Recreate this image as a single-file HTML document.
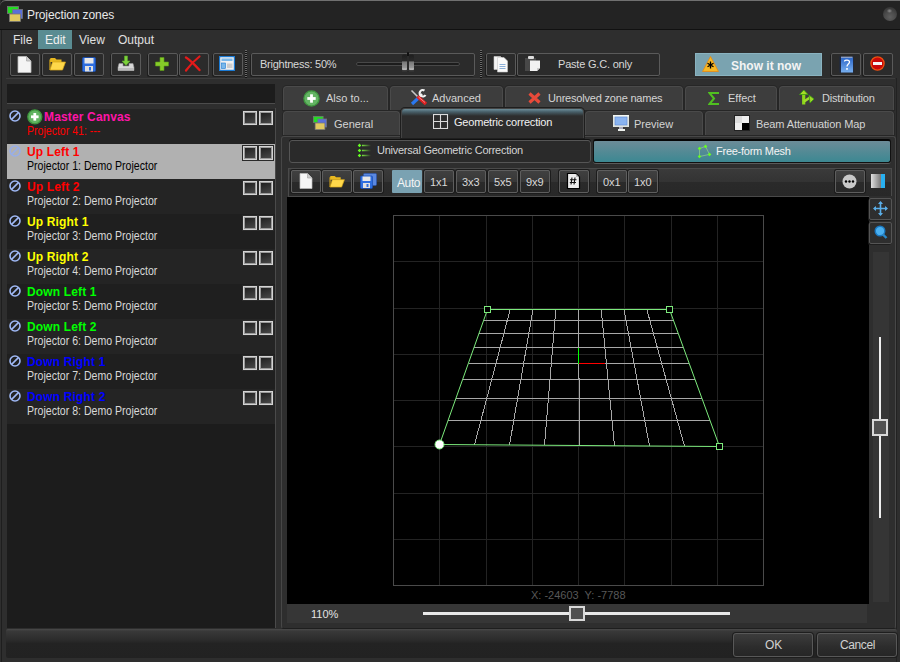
<!DOCTYPE html>
<html><head><meta charset="utf-8">
<style>
*{box-sizing:border-box;margin:0;padding:0}
html,body{width:900px;height:662px;overflow:hidden;background:#2f2f2f;font-family:"Liberation Sans",sans-serif;font-size:11px;color:#d8d8d8}
.a{position:absolute}
.t{position:absolute;white-space:nowrap;line-height:13px}
.btn{position:absolute;border:1px solid #5a5a5a;background:#2b2b2b;border-radius:2px;box-shadow:-1px 1px 0 #1e1e1e}
.gbtn{position:absolute;border:1px solid #5e5e5e;border-radius:2px;box-shadow:0 0 0 1px #1c1c1c;background:linear-gradient(#404040 0,#383838 50%,#2a2a2a 50%,#282828 100%)}
.obtn{position:absolute;border:1px solid #585858;border-radius:3px;box-shadow:0 0 0 1px #1e1e1e;background:linear-gradient(#3c3c3c,#2c2c2c 60%,#262626)}
.tab{position:absolute;border:1px solid #4a4a4a;border-bottom:none;border-radius:4px 4px 0 0;background:#3d3d3d;box-shadow:0 0 0 1px #262626}
.row{position:absolute;left:7px;width:268px;height:35px}
.ban{position:absolute;left:2px;top:1px;width:12px;height:12px}
.cb{position:absolute;top:2px;width:14px;height:14px;border:1px solid #d4d4d4;box-shadow:inset 0 0 0 1px #9a9a9a,0 0 0 1px #2a2a2a;background:linear-gradient(160deg,#1c1c1c,#4c4c4c)}
.nm{position:absolute;left:20px;top:1px;font-weight:bold;font-size:12px;line-height:14px;letter-spacing:0.15px;white-space:nowrap}
.pj{position:absolute;left:20px;top:15px;font-size:12px;line-height:14px;transform:scaleX(0.88);transform-origin:0 0;white-space:nowrap;color:#d8d8d8}
</style></head><body>
<!-- window frame -->
<div class="a" style="left:0;top:0;width:900px;height:662px;background:#2e2e2e"></div><div class="a" style="left:1px;top:0;width:1px;height:662px;background:#1e1e1e"></div><div class="a" style="left:896px;top:78px;width:1px;height:584px;background:#222"></div>
<!-- title bar -->
<div class="a" style="left:0;top:0;width:900px;height:30px;background:#232323;border-top:1px solid #707070;border-radius:6px 0 0 0;border-bottom:1px solid #111"></div>
<svg class="a" style="left:6px;top:5px" width="18" height="18" viewBox="0 0 18 18">
<rect x="1.5" y="1.5" width="11" height="7" fill="#22dd22" stroke="#777" stroke-width="0.8"/>
<rect x="6.5" y="4.5" width="10" height="9" fill="#5a6fd8" stroke="#777" stroke-width="0.8"/>
<rect x="3.5" y="9" width="11" height="7.5" fill="#e0c860" stroke="#777" stroke-width="0.8"/>
</svg>
<div class="t" style="left:27px;top:9px;font-size:12px;letter-spacing:-0.1px;color:#e8e8e8">Projection zones</div>
<div class="a" style="left:883px;top:7px;width:14px;height:14px;border-radius:50%;background:radial-gradient(circle at 50% 72%,#5e5e5e 0,#4a4a4a 45%,#2a2a2a 100%)"></div><div class="a" style="left:887px;top:9px;width:5px;height:4px;border-radius:50%;background:radial-gradient(#8a8a8a,#5a5a5a 60%,transparent 100%)"></div>

<!-- menu -->
<div class="a" style="left:38px;top:30px;width:34px;height:19px;background:#5a8c92"></div>
<div class="t" style="left:13px;top:34px;font-size:12px;color:#e0e0e0">File</div>
<div class="t" style="left:45px;top:34px;font-size:12px;color:#f0f0f0">Edit</div>
<div class="t" style="left:79px;top:34px;font-size:12px;color:#e0e0e0">View</div>
<div class="t" style="left:118px;top:34px;font-size:12px;color:#e0e0e0">Output</div>

<!-- toolbar -->
<div class="btn" style="left:10px;top:53px;width:30px;height:23px"></div>
<div class="btn" style="left:42px;top:53px;width:30px;height:23px"></div>
<div class="btn" style="left:74px;top:53px;width:30px;height:23px"></div>
<div class="btn" style="left:111px;top:53px;width:30px;height:23px"></div>
<div class="btn" style="left:148px;top:53px;width:30px;height:23px"></div>
<div class="btn" style="left:179px;top:53px;width:30px;height:23px"></div>
<div class="btn" style="left:213px;top:53px;width:30px;height:23px"></div>
<div class="a" style="left:245px;top:50px;width:2px;height:28px;background:repeating-linear-gradient(#6a6a6a 0,#6a6a6a 1px,#111 1px,#111 2px)"></div>
<div class="btn" style="left:251px;top:53px;width:224px;height:23px"></div>
<div class="t" style="left:260px;top:58px;font-size:11px;letter-spacing:-0.25px;color:#d8d8d8">Brightness: 50%</div>
<div class="a" style="left:356px;top:62px;width:104px;height:4px;background:#1c1c1c;border:1px solid #484848;border-radius:2px"></div>
<svg class="a" style="left:401px;top:51px" width="14" height="22" viewBox="0 0 14 22"><defs><linearGradient id="th" x1="0" y1="0" x2="0" y2="1"><stop offset="0" stop-color="#1e1e1e"/><stop offset="0.42" stop-color="#2a2a2a"/><stop offset="0.45" stop-color="#777"/><stop offset="0.85" stop-color="#999"/><stop offset="0.92" stop-color="#ccc"/><stop offset="1" stop-color="#555"/></linearGradient></defs><rect x="1" y="3.5" width="5" height="16" rx="1.5" fill="url(#th)"/><rect x="8" y="3.5" width="5" height="16" rx="1.5" fill="url(#th)"/><rect x="6" y="1" width="2" height="20" rx="1" fill="#111"/><rect x="6.5" y="5" width="1" height="15" fill="#444"/><rect x="1" y="19.5" width="12" height="1" fill="#3a3a3a"/></svg>
<div class="a" style="left:480px;top:50px;width:2px;height:28px;background:repeating-linear-gradient(#6a6a6a 0,#6a6a6a 1px,#111 1px,#111 2px)"></div>
<div class="btn" style="left:486px;top:53px;width:30px;height:23px"></div>
<div class="btn" style="left:517px;top:53px;width:143px;height:23px"></div>
<div class="t" style="left:558px;top:58px;font-size:11px;letter-spacing:-0.2px;color:#d8d8d8">Paste G.C. only</div>
<div class="a" style="left:695px;top:53px;width:127px;height:23px;background:#7aa3b0;border:1px solid #8ab3c0"></div>
<div class="t" style="left:731px;top:60px;font-size:12px;font-weight:bold;color:#f4f4f4">Show it now</div>
<div class="btn" style="left:831px;top:53px;width:30px;height:23px"></div>
<div class="btn" style="left:863px;top:53px;width:30px;height:23px"></div>
<div class="a" style="left:6px;top:78px;width:889px;height:1px;background:#3c3c3c"></div>

<!-- left panel -->
<div class="a" style="left:7px;top:84px;width:268px;height:20px;background:#1c1c1c;border-bottom:1px solid #4c4c4c"></div>
<div class="a" style="left:7px;top:109px;width:268px;height:519px;background:#1c1c1c"></div>
<div class="a" style="left:275px;top:108px;width:1px;height:520px;background:#4a4a4a"></div>
<div class="row" style="top:109px;background:#242424"><svg class="ban" viewBox="0 0 12 12"><circle cx="6" cy="6" r="5" fill="none" stroke="#9fb8f4" stroke-width="1.6"/><line x1="2.6" y1="9.4" x2="9.4" y2="2.6" stroke="#9fb8f4" stroke-width="1.6"/></svg><svg class="a" style="left:20px;top:0px" width="16" height="16" viewBox="0 0 16 16"><circle cx="7.8" cy="7.8" r="7" fill="#62b462" stroke="#3d963d" stroke-width="1.3"/><rect x="4" y="6.4" width="7.6" height="2.8" fill="#fff"/><rect x="6.4" y="4" width="2.8" height="7.6" fill="#fff"/></svg><div class="nm" style="left:37px;color:#ff14a8">Master Canvas</div><div class="pj" style="color:#ff0000">Projector 41: ---</div><div class="cb" style="left:236px"></div><div class="cb" style="left:252px"></div></div>
<div class="row" style="top:144px;background:#b1b1b1"><svg class="ban" viewBox="0 0 12 12"><circle cx="6" cy="6" r="5" fill="none" stroke="#98aee8" stroke-width="1.6"/><line x1="2.6" y1="9.4" x2="9.4" y2="2.6" stroke="#98aee8" stroke-width="1.6"/></svg><div class="nm" style="color:#ff0000">Up Left 1</div><div class="pj" style="color:#000000">Projector 1: Demo Projector</div><div class="cb" style="left:236px"></div><div class="cb" style="left:252px"></div></div>
<div class="row" style="top:179px;background:#242424"><svg class="ban" viewBox="0 0 12 12"><circle cx="6" cy="6" r="5" fill="none" stroke="#9fb8f4" stroke-width="1.6"/><line x1="2.6" y1="9.4" x2="9.4" y2="2.6" stroke="#9fb8f4" stroke-width="1.6"/></svg><div class="nm" style="color:#ff0000">Up Left 2</div><div class="pj">Projector 2: Demo Projector</div><div class="cb" style="left:236px"></div><div class="cb" style="left:252px"></div></div>
<div class="row" style="top:214px;background:#1f1f1f"><svg class="ban" viewBox="0 0 12 12"><circle cx="6" cy="6" r="5" fill="none" stroke="#9fb8f4" stroke-width="1.6"/><line x1="2.6" y1="9.4" x2="9.4" y2="2.6" stroke="#9fb8f4" stroke-width="1.6"/></svg><div class="nm" style="color:#ffff00">Up Right 1</div><div class="pj">Projector 3: Demo Projector</div><div class="cb" style="left:236px"></div><div class="cb" style="left:252px"></div></div>
<div class="row" style="top:249px;background:#242424"><svg class="ban" viewBox="0 0 12 12"><circle cx="6" cy="6" r="5" fill="none" stroke="#9fb8f4" stroke-width="1.6"/><line x1="2.6" y1="9.4" x2="9.4" y2="2.6" stroke="#9fb8f4" stroke-width="1.6"/></svg><div class="nm" style="color:#ffff00">Up Right 2</div><div class="pj">Projector 4: Demo Projector</div><div class="cb" style="left:236px"></div><div class="cb" style="left:252px"></div></div>
<div class="row" style="top:284px;background:#1f1f1f"><svg class="ban" viewBox="0 0 12 12"><circle cx="6" cy="6" r="5" fill="none" stroke="#9fb8f4" stroke-width="1.6"/><line x1="2.6" y1="9.4" x2="9.4" y2="2.6" stroke="#9fb8f4" stroke-width="1.6"/></svg><div class="nm" style="color:#00ff00">Down Left 1</div><div class="pj">Projector 5: Demo Projector</div><div class="cb" style="left:236px"></div><div class="cb" style="left:252px"></div></div>
<div class="row" style="top:319px;background:#242424"><svg class="ban" viewBox="0 0 12 12"><circle cx="6" cy="6" r="5" fill="none" stroke="#9fb8f4" stroke-width="1.6"/><line x1="2.6" y1="9.4" x2="9.4" y2="2.6" stroke="#9fb8f4" stroke-width="1.6"/></svg><div class="nm" style="color:#00ff00">Down Left 2</div><div class="pj">Projector 6: Demo Projector</div><div class="cb" style="left:236px"></div><div class="cb" style="left:252px"></div></div>
<div class="row" style="top:354px;background:#1f1f1f"><svg class="ban" viewBox="0 0 12 12"><circle cx="6" cy="6" r="5" fill="none" stroke="#9fb8f4" stroke-width="1.6"/><line x1="2.6" y1="9.4" x2="9.4" y2="2.6" stroke="#9fb8f4" stroke-width="1.6"/></svg><div class="nm" style="color:#0000ff">Down Right 1</div><div class="pj">Projector 7: Demo Projector</div><div class="cb" style="left:236px"></div><div class="cb" style="left:252px"></div></div>
<div class="row" style="top:389px;background:#242424"><svg class="ban" viewBox="0 0 12 12"><circle cx="6" cy="6" r="5" fill="none" stroke="#9fb8f4" stroke-width="1.6"/><line x1="2.6" y1="9.4" x2="9.4" y2="2.6" stroke="#9fb8f4" stroke-width="1.6"/></svg><div class="nm" style="color:#0000ff">Down Right 2</div><div class="pj">Projector 8: Demo Projector</div><div class="cb" style="left:236px"></div><div class="cb" style="left:252px"></div></div>


<!-- tabs row 1 -->
<div class="tab" style="left:283px;top:86px;width:105px;height:24px"></div>
<div class="tab" style="left:390px;top:86px;width:113px;height:24px"></div>
<div class="tab" style="left:505px;top:86px;width:178px;height:24px"></div>
<div class="tab" style="left:685px;top:86px;width:92px;height:24px"></div>
<div class="tab" style="left:779px;top:86px;width:115px;height:24px"></div>
<!-- tabs row 2 -->
<div class="tab" style="left:283px;top:111px;width:117px;height:24px"></div>
<div class="tab" style="left:585px;top:111px;width:118px;height:24px"></div>
<div class="tab" style="left:705px;top:111px;width:189px;height:24px"></div>

<!-- right panel -->
<div class="a" style="left:281px;top:136px;width:615px;height:493px;background:#2e2e2e;border:1px solid #474747;border-bottom-color:#1e1e1e;border-radius:3px"></div>
<div class="a" style="left:401px;top:108px;width:183px;height:30px;background:#2d2d2d;border:1px solid #444;border-bottom:none;border-radius:4px 4px 0 0;overflow:hidden;box-shadow:0 0 0 1px #1e1e1e"><div class="a" style="left:0;top:0;width:100%;height:7px;background:linear-gradient(#6e8e9a,#48606a 40%,#2d2d2d)"></div></div>

<div class="t" style="left:326px;top:92px;color:#d4d4d4">Also to...</div>
<div class="t" style="left:432px;top:92px;color:#d4d4d4">Advanced</div>
<div class="t" style="left:548px;top:92px;letter-spacing:-0.2px;color:#d4d4d4">Unresolved zone names</div>
<div class="t" style="left:728px;top:92px;color:#d4d4d4">Effect</div>
<div class="t" style="left:822px;top:92px;letter-spacing:-0.2px;color:#d4d4d4">Distribution</div>
<div class="t" style="left:334px;top:118px;color:#d4d4d4">General</div>
<div class="t" style="left:454px;top:116px;letter-spacing:-0.2px;color:#f2f2f2">Geometric correction</div>
<div class="t" style="left:634px;top:118px;color:#d4d4d4">Preview</div>
<div class="t" style="left:756px;top:118px;letter-spacing:-0.1px;color:#d4d4d4">Beam Attenuation Map</div>

<!-- mode buttons -->
<div class="a" style="left:289px;top:140px;width:302px;height:23px;background:#2a2a2a;border:1px solid #555;border-radius:3px;box-shadow:0 -1px 0 #111"></div>
<div class="t" style="left:377px;top:144px;letter-spacing:-0.25px;color:#d4d4d4">Universal Geometric Correction</div>
<div class="a" style="left:593px;top:139px;width:298px;height:24px;background:linear-gradient(#6c8c98,#3c8892);border:1px solid #111;border-top:2px solid #050505;border-radius:3px;box-shadow:0 1px 0 #5a5a5a"></div>
<div class="t" style="left:716px;top:145px;letter-spacing:-0.25px;color:#f4f4f4">Free-form Mesh</div>

<!-- toolbar -->
<div class="a" style="left:288px;top:168px;width:604px;height:29px;background:linear-gradient(#3a3a3a 0,#333 50%,#2a2a2a 50%,#282828 100%);border:1px solid #4a4a4a"></div>
<div class="gbtn" style="left:291px;top:170px;width:30px;height:23px"></div>
<div class="gbtn" style="left:322px;top:170px;width:30px;height:23px"></div>
<div class="gbtn" style="left:353px;top:170px;width:30px;height:23px"></div>
<div class="a" style="left:392px;top:170px;width:30px;height:23px;background:#7aa2b2;border-radius:1px"></div>
<div class="t" style="left:397px;top:177px;font-size:12px;color:#f4f4f4;letter-spacing:-0.4px">Auto</div>
<div class="gbtn" style="left:424px;top:170px;width:30px;height:23px"></div>
<div class="t" style="left:430px;top:176px;color:#d8d8d8">1x1</div>
<div class="gbtn" style="left:456px;top:170px;width:30px;height:23px"></div>
<div class="t" style="left:462px;top:176px;color:#d8d8d8">3x3</div>
<div class="gbtn" style="left:488px;top:170px;width:30px;height:23px"></div>
<div class="t" style="left:494px;top:176px;color:#d8d8d8">5x5</div>
<div class="gbtn" style="left:520px;top:170px;width:30px;height:23px"></div>
<div class="t" style="left:526px;top:176px;color:#d8d8d8">9x9</div>
<div class="gbtn" style="left:559px;top:170px;width:30px;height:23px"></div>
<div class="gbtn" style="left:597px;top:170px;width:30px;height:23px"></div>
<div class="t" style="left:603px;top:176px;color:#d8d8d8">0x1</div>
<div class="gbtn" style="left:628px;top:170px;width:30px;height:23px"></div>
<div class="t" style="left:634px;top:176px;color:#d8d8d8">1x0</div>
<div class="gbtn" style="left:835px;top:170px;width:30px;height:23px"></div>

<!-- viewport -->
<div class="a" style="left:287px;top:197px;width:582px;height:407px;background:#000"></div>
<div class="a" style="left:869px;top:196px;width:26px;height:406px;background:#2e2e2e"></div>
<div class="a" style="left:873px;top:252px;width:16px;height:350px;background:#353535"></div>
<div class="btn" style="left:869px;top:198px;width:23px;height:22px;background:#2e2e2e;border-color:#555"></div>
<div class="btn" style="left:869px;top:222px;width:23px;height:22px;background:#2e2e2e;border-color:#555"></div>
<div class="a" style="left:879px;top:337px;width:2px;height:181px;background:#eee"></div>
<div class="a" style="left:872px;top:419px;width:16px;height:17px;background:#505050;border:2px solid #d8d8d8"></div>

<!-- zoom bar -->
<div class="a" style="left:287px;top:604px;width:580px;height:19px;background:#363636"></div>
<div class="t" style="left:311px;top:608px;color:#e4e4e4">110%</div>
<div class="a" style="left:423px;top:612px;width:307px;height:3px;background:#e8e8e8"></div>
<div class="a" style="left:569px;top:606px;width:16px;height:15px;background:#505050;border:2px solid #d8d8d8"></div>
<svg class="a" style="left:287px;top:196px" width="582" height="408" viewBox="287 196 582 408"><g stroke="#232323" stroke-width="1"><line x1="439.5" y1="215.5" x2="439.5" y2="585.5"/><line x1="486.5" y1="215.5" x2="486.5" y2="585.5"/><line x1="532.5" y1="215.5" x2="532.5" y2="585.5"/><line x1="578.5" y1="215.5" x2="578.5" y2="585.5"/><line x1="624.5" y1="215.5" x2="624.5" y2="585.5"/><line x1="671.5" y1="215.5" x2="671.5" y2="585.5"/><line x1="717.5" y1="215.5" x2="717.5" y2="585.5"/><line x1="393.5" y1="261.5" x2="763.5" y2="261.5"/><line x1="393.5" y1="308.5" x2="763.5" y2="308.5"/><line x1="393.5" y1="354.5" x2="763.5" y2="354.5"/><line x1="393.5" y1="400.5" x2="763.5" y2="400.5"/><line x1="393.5" y1="446.5" x2="763.5" y2="446.5"/><line x1="393.5" y1="493.5" x2="763.5" y2="493.5"/><line x1="393.5" y1="539.5" x2="763.5" y2="539.5"/></g><rect x="393.5" y="215.5" width="370" height="370" fill="none" stroke="#4a4a4a" stroke-width="1"/><g stroke="#a8a8a8" stroke-width="1" shape-rendering="crispEdges"><line x1="510.2" y1="309.5" x2="474.5" y2="444.8"/><line x1="533.0" y1="309.5" x2="509.5" y2="445.0"/><line x1="555.8" y1="309.5" x2="544.5" y2="445.2"/><line x1="578.5" y1="309.5" x2="579.5" y2="445.5"/><line x1="601.2" y1="309.5" x2="614.5" y2="445.8"/><line x1="624.0" y1="309.5" x2="649.5" y2="446.0"/><line x1="646.8" y1="309.5" x2="684.5" y2="446.2"/><line x1="483.6" y1="320.5" x2="673.5" y2="320.5"/><line x1="479.0" y1="333.5" x2="678.3" y2="333.5"/><line x1="474.0" y1="347.5" x2="683.4" y2="347.5"/><line x1="468.7" y1="363.5" x2="688.8" y2="363.5"/><line x1="462.6" y1="379.5" x2="695.0" y2="379.5"/><line x1="455.9" y1="398.5" x2="702.0" y2="398.5"/><line x1="448.0" y1="420.5" x2="710.0" y2="420.5"/></g><line x1="578.5" y1="348" x2="578.5" y2="364" stroke="#00ff00" stroke-width="1"/><line x1="579" y1="363.5" x2="605" y2="363.5" stroke="#ff0000" stroke-width="1"/><polygon points="487.5,309.5 669.5,309.5 719.5,446.5 439.5,444.5" fill="none" stroke="#7cea7c" stroke-width="1"/><rect x="484.5" y="306.5" width="6" height="6" fill="#000" stroke="#7cea7c" stroke-width="1"/><rect x="666.5" y="306.5" width="6" height="6" fill="#000" stroke="#7cea7c" stroke-width="1"/><rect x="716.5" y="443.5" width="6" height="6" fill="#000" stroke="#7cea7c" stroke-width="1"/><circle cx="439.5" cy="444.5" r="4.5" fill="#fff" stroke="#7cea7c" stroke-width="1"/></svg>
<div class="t" style="left:531px;top:589px;font-size:11px;color:#585858">X: -24603&nbsp; Y: -7788</div>


<!-- bottom bar -->
<div class="a" style="left:6px;top:629px;width:891px;height:29px;background:linear-gradient(#4a4a4a 0,#393939 2px,#2a2a2a 40%,#232323 50%,#222 100%);border-radius:2px"></div>
<div class="obtn" style="left:733px;top:633px;width:80px;height:24px"></div>
<div class="t" style="left:765px;top:639px;font-size:12px;color:#d0d0d0">OK</div>
<div class="obtn" style="left:817px;top:633px;width:80px;height:24px"></div>
<div class="t" style="left:840px;top:639px;font-size:12px;letter-spacing:-0.4px;color:#d0d0d0">Cancel</div>

<!-- toolbar icons -->
<svg class="a" style="left:17px;top:56px" width="15" height="17" viewBox="0 0 15 17"><path d="M1 0.5H9.5L14 5V16.5H1Z" fill="#f4f4f4" stroke="#bbb" stroke-width="0.8"/><path d="M9.5 0.5V5H14" fill="#ccc" stroke="#aaa" stroke-width="0.8"/></svg>
<svg class="a" style="left:49px;top:57px" width="17" height="14" viewBox="0 0 17 14"><path d="M1 2.5C1 1.5 1.5 1 2.5 1H6L7.5 2.5H12.5V5H1Z" fill="#e8b820"/><path d="M1 13L3.5 5H16.5L13.5 13Z" fill="#ffd84a" stroke="#d9a818" stroke-width="0.7"/><path d="M1 2.5V13" stroke="#d9a818" stroke-width="1.2"/></svg>
<svg class="a" style="left:82px;top:57px" width="14" height="15" viewBox="0 0 14 15"><rect x="0.5" y="0.5" width="13" height="14" rx="1" fill="#2e6ee0" stroke="#1b4fb0" stroke-width="0.8"/><rect x="2.5" y="1" width="9" height="5.5" fill="#e8e8e8"/><rect x="3" y="9" width="8" height="5.5" fill="#e0e0e0"/><rect x="7" y="10" width="2" height="3.5" fill="#2e6ee0"/></svg>
<svg class="a" style="left:117px;top:55px" width="18" height="17" viewBox="0 0 18 17"><path d="M2 8.5H6V11H12V8.5H16L17 12.5V15.5H1V12.5Z" fill="#d8d8d8" stroke="#999" stroke-width="0.6"/><path d="M1 13H17V15.5H1Z" fill="#bbb"/><path d="M7.5 1H10.5V6H13L9 10.5L5 6H7.5Z" fill="#7dd23a" stroke="#5aa82a" stroke-width="0.6"/></svg>
<svg class="a" style="left:155px;top:57px" width="14" height="14" viewBox="0 0 14 14"><path d="M5 0.5H9V5H13.5V9H9V13.5H5V9H0.5V5H5Z" fill="#86cc28" stroke="#5c9a18" stroke-width="0.6"/></svg>
<svg class="a" style="left:183px;top:54px" width="20" height="19" viewBox="183 54 20 19"><path d="M186 57.5C190 60 194 64 199.5 70" fill="none" stroke="#e41a1a" stroke-width="2.4" stroke-linecap="round"/><path d="M199.5 56.5C195 60 190 65 186 70.5" fill="none" stroke="#e41a1a" stroke-width="2.2" stroke-linecap="round"/></svg>
<svg class="a" style="left:219px;top:56px" width="16" height="15" viewBox="0 0 16 15"><rect x="0.5" y="0.5" width="15" height="14" fill="#f0f0f0" stroke="#1a7ad4" stroke-width="1.4"/><rect x="2.5" y="2.5" width="11" height="2.5" fill="#7ab8ea"/><rect x="2.5" y="7" width="4" height="5.5" fill="#7ab8ea" stroke="#1a7ad4" stroke-width="0.6"/><rect x="8" y="7.5" width="5.5" height="4.5" fill="#ccc"/></svg>
<svg class="a" style="left:493px;top:56px" width="16" height="17" viewBox="0 0 16 17"><path d="M1 0.5H7.5L10.5 3.5V13.5H1Z" fill="#f4f4f4" stroke="#ccc" stroke-width="0.6"/><path d="M4.5 1.5H11L14.5 5V16H4.5Z" fill="#fafafa" stroke="#c8c8c8" stroke-width="0.6"/><path d="M6.5 8.5H12.5M6.5 10.5H12.5M6.5 12.5H12.5" stroke="#8cb0d8" stroke-width="1"/></svg>
<svg class="a" style="left:524px;top:55px" width="17" height="17" viewBox="0 0 17 17"><rect x="1" y="3" width="11" height="13" fill="#484848"/><rect x="4" y="1" width="6" height="3" rx="1" fill="#ddd"/><path d="M6 5.5H16V13L13 16H6Z" fill="#f2f2f2"/><path d="M13 16V13H16" fill="#ccc"/></svg>
<svg class="a" style="left:702px;top:56px" width="17" height="16" viewBox="0 0 17 16"><path d="M8.5 0.5L16.5 15.5H0.5Z" fill="#f7b824" stroke="#e88a10" stroke-width="0.8" stroke-linejoin="round"/><path d="M8.5 5.5V12.5M5.5 7.2L11.5 10.8M5.5 10.8L11.5 7.2" stroke="#000" stroke-width="1.3"/></svg>
<svg class="a" style="left:839px;top:56px" width="15" height="17" viewBox="0 0 15 17"><rect x="0.5" y="0.5" width="14" height="16" fill="#1c2a48"/><rect x="2" y="1.5" width="12" height="15" fill="url(#bk)"/><defs><linearGradient id="bk" x1="0" y1="0" x2="0" y2="1"><stop offset="0" stop-color="#2c66c8"/><stop offset="1" stop-color="#78b0f0"/></linearGradient></defs><path d="M2 1.2H13.5" stroke="#e0e8f8" stroke-width="0.8"/><path d="M5.5 5.5C5.5 3.5 10.5 3.5 10.5 6C10.5 8 8 8 8 10.5" fill="none" stroke="#fff" stroke-width="1.3"/><rect x="7.2" y="12" width="1.6" height="1.8" fill="#fff"/></svg>
<svg class="a" style="left:870px;top:56px" width="15" height="15" viewBox="0 0 15 15"><circle cx="7.5" cy="7.5" r="6.6" fill="#c80808" stroke="#f05010" stroke-width="1.3"/><rect x="3" y="6" width="9" height="3" fill="#f4f4f4"/></svg>

<!-- tab icons -->
<svg class="a" style="left:303px;top:90px" width="17" height="17" viewBox="0 0 17 17"><circle cx="8.5" cy="8.5" r="7.6" fill="#64b464" stroke="#3f973f" stroke-width="1.3"/><rect x="4.3" y="7.1" width="8.4" height="2.8" fill="#fff"/><rect x="7.1" y="4.3" width="2.8" height="8.4" fill="#fff"/></svg>
<svg class="a" style="left:405px;top:86px" width="30" height="22" viewBox="405 86 30 22"><path d="M411.5 90.5L417.5 96.5" stroke="#c8c8c8" stroke-width="1.6"/><path d="M412 104L419 97.5" stroke="#2a78f0" stroke-width="3.2"/><path d="M419 97.5L422 94" stroke="#eee" stroke-width="2"/><path d="M424.5 90.5A3.2 3.2 0 1 0 425.5 95" fill="none" stroke="#f0f0f0" stroke-width="2.2"/><path d="M417.5 96.5L426 104" stroke="#e02020" stroke-width="3.4"/><path d="M418.5 97L425 102.5" stroke="#f4a0a0" stroke-width="0.8"/></svg>
<svg class="a" style="left:528px;top:92px" width="13" height="12" viewBox="0 0 13 12"><path d="M1.5 1.5L11.5 10.5M11.5 1.5L1.5 10.5" stroke="#e84a3a" stroke-width="3.2"/></svg>
<svg class="a" style="left:708px;top:92px" width="12" height="13" viewBox="0 0 12 13"><path d="M11 1H1.5L6 6.5L1.5 12H11" fill="none" stroke="#50c020" stroke-width="2"/></svg>
<svg class="a" style="left:795px;top:86px" width="25" height="22" viewBox="795 86 25 22"><path d="M803.7 104.5V94" stroke="#8ed81a" stroke-width="3.2"/><path d="M804 101.5L810 97.5" stroke="#a0dc2a" stroke-width="2.6"/><path d="M799.5 94.5L803.8 90L808 94.5Z" fill="#a8dc28" stroke="#3aa010" stroke-width="0.8"/><path d="M809 95L814 99L810 103Z" fill="#a0d828" stroke="#3aa010" stroke-width="0.8"/></svg>
<svg class="a" style="left:312px;top:115px" width="16" height="16" viewBox="0 0 18 18"><rect x="1.5" y="1.5" width="11" height="7" fill="#22dd22" stroke="#777" stroke-width="0.8"/><rect x="6.5" y="4.5" width="10" height="9" fill="#5a6fd8" stroke="#777" stroke-width="0.8"/><rect x="3.5" y="9" width="11" height="7.5" fill="#e0c860" stroke="#777" stroke-width="0.8"/></svg>
<svg class="a" style="left:433px;top:114px" width="16" height="15" viewBox="0 0 16 15"><rect x="0.5" y="0.5" width="14" height="14" fill="none" stroke="#dcdcdc" stroke-width="1.1"/><path d="M7.5 0.5V14.5M0.5 7.5H14.5" stroke="#dcdcdc" stroke-width="1.1"/></svg>
<svg class="a" style="left:613px;top:115px" width="16" height="17" viewBox="0 0 16 17"><rect x="0" y="0" width="16" height="12" fill="#dfe4e0"/><rect x="0" y="0" width="16" height="1.5" fill="#f4f8f4"/><rect x="2" y="2" width="12" height="8" fill="#8ab4f0" stroke="#5a88d8" stroke-width="0.6"/><rect x="6" y="12" width="4" height="2" fill="#aab"/><rect x="5" y="14" width="7" height="2" fill="#eef2ee"/></svg>
<svg class="a" style="left:734px;top:115px" width="16" height="16" viewBox="0 0 16 16"><rect x="0.5" y="0.5" width="15" height="15" fill="#f0f0f0" stroke="#222" stroke-width="1"/><rect x="8" y="8" width="7" height="7" fill="#000"/><rect x="1" y="1" width="7" height="7" fill="#ddd"/></svg>
<svg class="a" style="left:350px;top:138px" width="30" height="24" viewBox="350 138 30 24"><defs><linearGradient id="lg" x1="0" y1="0" x2="1" y2="0"><stop offset="0" stop-color="#78e040"/><stop offset="1" stop-color="#78e040" stop-opacity="0"/></linearGradient></defs><path d="M359.5 143.6L361.3 145.4L359.5 147.2L357.7 145.4Z M359.5 148.7L361.3 150.5L359.5 152.3L357.7 150.5Z M359.5 153.7L361.3 155.5L359.5 157.3L357.7 155.5Z" fill="#66ff22"/><path d="M362 145.5H371M362 150.5H371M362 155.5H371" stroke="url(#lg)" stroke-width="1.3"/></svg>
<svg class="a" style="left:690px;top:138px" width="30" height="24" viewBox="690 138 30 24"><path d="M699.5 148.5L705.5 146.4L709.5 154.4L699.5 156.5Z" fill="none" stroke="#90c890" stroke-opacity="0.75" stroke-width="1"/><path d="M699.5 146.7L701.3 148.5L699.5 150.3L697.7 148.5ZM705.5 144.6L707.3 146.4L705.5 148.20000000000002L703.7 146.4ZM709.5 152.6L711.3 154.4L709.5 156.20000000000002L707.7 154.4ZM699.5 154.7L701.3 156.5L699.5 158.3L697.7 156.5Z" fill="#66ff22"/></svg>

<!-- right toolbar icons -->
<svg class="a" style="left:299px;top:173px" width="14" height="16" viewBox="0 0 14 16"><path d="M1 0.5H8.5L13 5V15.5H1Z" fill="#f6f6f6" stroke="#bbb" stroke-width="0.7"/><path d="M8.5 0.5V5H13" fill="#ccc" stroke="#aaa" stroke-width="0.7"/></svg>
<svg class="a" style="left:329px;top:175px" width="16" height="13" viewBox="0 0 17 14"><path d="M1 2.5C1 1.5 1.5 1 2.5 1H6L7.5 2.5H12.5V5H1Z" fill="#e8b820"/><path d="M1 13L3.5 5H16.5L13.5 13Z" fill="#ffd84a" stroke="#d9a818" stroke-width="0.7"/><path d="M1 2.5V13" stroke="#d9a818" stroke-width="1.2"/></svg>
<svg class="a" style="left:360px;top:173px" width="17" height="16" viewBox="0 0 17 16"><rect x="3.5" y="0.5" width="13" height="12" rx="1" fill="#5a88e0" stroke="#2a55b0" stroke-width="0.6"/><rect x="0.5" y="3" width="12" height="12.5" rx="1" fill="#2e6ee0" stroke="#1b4fb0" stroke-width="0.7"/><rect x="2.5" y="3.5" width="8" height="4.5" fill="#e8e8e8"/><rect x="3" y="10" width="7" height="5" fill="#e0e0e0"/><rect x="6.5" y="11" width="2" height="3" fill="#2e6ee0"/></svg>
<svg class="a" style="left:565px;top:171px" width="18" height="20" viewBox="565 171 18 20"><path d="M567.5 173.5H576L579.5 177V188.5H567.5Z" fill="#ececec" stroke="#000" stroke-width="1.2"/><path d="M576 174V177H579" fill="#bbb"/><path d="M572 177.5L571 184.5M575 177.5L574 184.5M570 179.8H576.5M569.8 182.5H576" stroke="#111" stroke-width="1.1"/></svg>
<svg class="a" style="left:842px;top:174px" width="15" height="15" viewBox="0 0 15 15"><circle cx="7.5" cy="7.5" r="7" fill="#c8c8c8"/><circle cx="4" cy="7.5" r="1.2" fill="#000"/><circle cx="7.5" cy="7.5" r="1.2" fill="#000"/><circle cx="11" cy="7.5" r="1.2" fill="#000"/></svg>
<div class="a" style="left:871px;top:174px;width:10px;height:14px;background:linear-gradient(90deg,#e0e0e0,#777)"></div>
<div class="a" style="left:881px;top:174px;width:4px;height:14px;background:#28b0f0"></div>
<svg class="a" style="left:873px;top:201px" width="15" height="15" viewBox="0 0 15 15"><path d="M7.5 1V14M1 7.5H14" stroke="#5aaee8" stroke-width="1.6"/><path d="M7.5 0L10 3H5ZM7.5 15L10 12H5ZM0 7.5L3 5V10ZM15 7.5L12 5V10Z" fill="#5aaee8"/></svg>
<svg class="a" style="left:874px;top:225px" width="14" height="15" viewBox="0 0 14 15"><circle cx="6" cy="6" r="4.8" fill="#4ab0f0" stroke="#1a78c0" stroke-width="1.4"/><path d="M9 9.5L12.5 13" stroke="#2a88c8" stroke-width="2.4"/></svg>
</body></html>
